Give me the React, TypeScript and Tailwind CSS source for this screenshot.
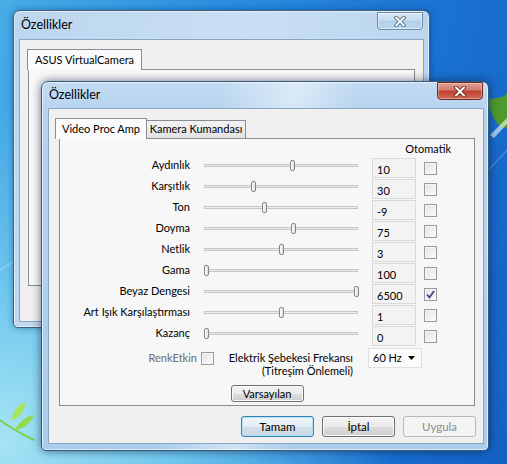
import React from "react";

type Row = { label: string; value: string; pos: number; checked?: boolean };

// pos = thumb centre, px from the left end of the track
const rows: Row[] = [
  { label: "Aydınlık", value: "10", pos: 88 },
  { label: "Karşıtlık", value: "30", pos: 49 },
  { label: "Ton", value: "-9", pos: 60 },
  { label: "Doyma", value: "75", pos: 89 },
  { label: "Netlik", value: "3", pos: 77 },
  { label: "Gama", value: "100", pos: 2 },
  { label: "Beyaz Dengesi", value: "6500", pos: 152, checked: true },
  { label: "Art Işık Karşılaştırması", value: "1", pos: 77 },
  { label: "Kazanç", value: "0", pos: 2 },
];

const CheckBox = ({ checked = false }: { checked?: boolean }) => (
  <div className="w-[13px] h-[13px] border border-[#9a9a9a] bg-[linear-gradient(135deg,#e4e4e4,#fbfbfb)] shadow-[inset_0_0_0_1px_#f6f6f6] flex items-center justify-center">
    {checked && (
      <svg width="9" height="9" viewBox="0 0 9 9">
        <path d="M1 4.5 L3.5 7.5 L8 1" fill="none" stroke="#3f4f86" strokeWidth="1.8" />
      </svg>
    )}
  </div>
);

const Slider = ({ pos }: { pos: number }) => (
  <div className="relative w-[154px] h-[14px] shrink-0">
    <div className="absolute left-0 right-0 top-[6px] h-[3px] border border-[#c6c6c6] bg-[#ececec]" />
    <div
      className="absolute top-[2px] w-[5px] h-[11px] rounded-[2px] border border-[#868686] bg-[linear-gradient(90deg,#ffffff,#dedede)]"
      style={{ left: pos - 2 }}
    />
  </div>
);

const CloseButton = ({ active }: { active: boolean }) => (
  <div
    className={
      active
        ? "w-[46px] h-[18px] rounded-b-[4px] border border-[#6b2a2a] bg-[linear-gradient(180deg,#e3a093_0%,#d2796b_45%,#bf3f2f_50%,#cf6a55_100%)] shadow-[inset_0_0_0_1px_rgba(255,255,255,0.35)] flex items-center justify-center"
        : "w-[46px] h-[18px] rounded-b-[4px] border border-[#6a8aac] bg-[linear-gradient(180deg,#d8e8f6_0%,#c3daef_50%,#b2cfea_50%,#bcd6ef_100%)] shadow-[inset_0_0_0_1px_rgba(255,255,255,0.5)] flex items-center justify-center"
    }
  >
    <svg width="12" height="11" viewBox="0 0 12 11">
      <path
        d="M2 1.5 L10 9.5 M10 1.5 L2 9.5"
        stroke={active ? "#5a1d16" : "#3d5470"}
        strokeWidth="3.6"
        strokeLinecap="round"
      />
      <path d="M2 1.5 L10 9.5 M10 1.5 L2 9.5" stroke="#ffffff" strokeWidth="2" strokeLinecap="round" />
    </svg>
  </div>
);

const Button = ({ children, kind = "normal" }: { children: React.ReactNode; kind?: "normal" | "default" | "disabled" }) => {
  const cls =
    kind === "default"
      ? "border-[#3c7fb1] bg-[linear-gradient(180deg,#f1f6fa_0%,#e4edf4_50%,#d3e0ea_50%,#c9d8e4_100%)] shadow-[inset_0_0_0_1px_#aee4fb] text-black"
      : kind === "disabled"
      ? "border-[#b5b9bc] bg-[#f4f4f4] text-[#8d8d8d]"
      : "border-[#707070] bg-[linear-gradient(180deg,#f2f2f2_0%,#ebebeb_50%,#dddddd_50%,#cfcfcf_100%)] shadow-[inset_0_0_0_1px_#fbfbfb] text-black";
  return (
    <div className={`w-[73px] h-[21px] rounded-[3px] border flex items-center justify-center text-[11.5px] ${cls}`}>
      {children}
    </div>
  );
};

export default function App() {
  return (
    <div className="relative w-[507px] h-[464px] overflow-hidden font-['Lato',sans-serif] text-[11px] text-black bg-[radial-gradient(ellipse_at_0%_95%,#a6e4f4_0%,#6cc6ee_25%,transparent_55%),linear-gradient(105deg,#48ace6_0%,#2a8ee0_35%,#1a73d2_70%,#1461c4_100%)]">
      {/* desktop streaks + logo bits */}
      <svg className="absolute left-0 top-0" width="507" height="464" viewBox="0 0 507 464">
        <path d="M0 270 L40 245" stroke="rgba(255,255,255,0.45)" strokeWidth="1" />
        <path d="M470 190 L507 150" stroke="rgba(255,255,255,0.35)" strokeWidth="1" />
        <path d="M488 100 C498 96 504 100 507 92 L507 128 C500 128 492 122 488 100 Z" fill="#4f9a2c" />
        <path d="M490 135 L507 118 L507 124 L494 138 Z" fill="rgba(255,255,255,0.6)" />
        <path d="M12 418 C14 408 20 404 26 402 C24 412 20 418 12 420 Z" fill="#a6e45e" />
        <path d="M16 428 C20 420 28 416 34 415 C30 424 24 428 16 430 Z" fill="#8fdb4c" />
        <path d="M0 420 C10 428 22 434 34 440" stroke="#7cd04a" strokeWidth="2" fill="none" />
      </svg>

      {/* back window */}
      <div className="absolute left-[13px] top-[10px] w-[417px] h-[318px] rounded-t-[7px] rounded-b-[5px] border border-[#41607f] bg-[linear-gradient(100deg,#bcd6ef_0%,#c9dff3_50%,#b7d3ee_100%)] shadow-[0_0_6px_rgba(0,40,90,0.45),inset_0_0_0_1px_rgba(255,255,255,0.55)] flex flex-col">
        <div className="h-[28px] flex items-start justify-between pl-[7px] pr-[6px]">
          <span className="mt-[5px] text-[12.5px] leading-[18px]">Özellikler</span>
          <div className="mt-[1px]">
            <CloseButton active={false} />
          </div>
        </div>
        <div className="mx-[5px] mb-[5px] flex-1 border border-[#8ba5c1] bg-[#f0f0f0] pt-[8px] flex flex-col">
          <div className="flex pl-[7px]">
            <div className="h-[21px] px-[7px] border border-b-0 border-[#898c95] bg-[#fbfbfb] flex items-center relative top-[1px] whitespace-nowrap">
              ASUS VirtualCamera
            </div>
          </div>
          <div className="ml-[8px] mr-[8px] h-[217px] border border-[#898c95] bg-[#f8f8f8]" />
        </div>
      </div>

      {/* front window */}
      <div className="absolute left-[41px] top-[81px] w-[448px] h-[370px] rounded-t-[7px] rounded-b-[5px] border border-[#3a5878] bg-[linear-gradient(100deg,rgba(255,255,255,0)_35%,rgba(255,255,255,0.45)_50%,rgba(255,255,255,0)_62%),linear-gradient(180deg,#c2dbf2_0%,#b6d3ee_30px,#a9cdec_100%)] shadow-[0_0_10px_rgba(0,20,60,0.6),inset_0_0_0_1px_rgba(255,255,255,0.6)] flex flex-col">
        <div className="h-[26px] flex items-start justify-between pl-[7px] pr-[5px]">
          <span className="mt-[4px] text-[12.5px] leading-[18px]">Özellikler</span>
          <CloseButton active />
        </div>
        <div className="ml-[6px] mr-[4px] mb-[6px] flex-1 border border-[#8ba5c1] bg-[#f0f0f0] flex flex-col">
          {/* tabs */}
          <div className="flex items-end pl-[6px] pt-[8px] whitespace-nowrap">
            <div className="h-[21px] w-[92px] border border-b-0 border-[#898c95] bg-[#fbfbfb] flex items-center justify-center relative top-[1px] z-10">
              Video Proc Amp
            </div>
            <div className="h-[18px] w-[99px] border border-l-0 border-b-0 border-[#898c95] bg-[linear-gradient(180deg,#f3f3f3,#e3e3e3)] flex items-center justify-center">
              Kamera Kumandası
            </div>
          </div>
          {/* tab panel */}
          <div className="ml-[10px] mr-[8px] h-[268px] border border-[#898c95] bg-[#f7f7f7] pt-[3px] flex flex-col">
            <div className="h-[14px] leading-[14px] text-right pr-[23px]">Otomatik</div>
            <div className="mt-[2px] flex flex-col">
              {rows.map((r, i) => (
                <div key={`row${i}`} className="h-[21px] flex items-start">
                  <div className="w-[130px] h-[14px] leading-[14px] text-right whitespace-nowrap">{r.label}</div>
                  <div className="ml-[14px]">
                    <Slider pos={r.pos} />
                  </div>
                  <div className="ml-[14px] w-[44px] h-[20px] border border-[#d9d9d9] bg-[#f3f3f3] pl-[4px] leading-[19px] pt-[1px]">
                    {r.value}
                  </div>
                  <div className="ml-[8px] mt-[4px]">
                    <CheckBox checked={r.checked} />
                  </div>
                </div>
              ))}
            </div>
            {/* power line frequency row */}
            <div className="h-[32px] flex items-start">
              <div className="w-[141px] flex justify-end items-center mt-[5px]">
                <span className="text-[#6d6d6d] leading-[12px] mr-[4px]">RenkEtkin</span>
              </div>
              <div className="mt-[5px]">
                <CheckBox />
              </div>
              <div className="w-[139px] mt-[4px] text-right leading-[13px] whitespace-nowrap">
                <div>Elektrik Şebekesi Frekansı</div>
                <div>(Titreşim Önlemeli)</div>
              </div>
              <div className="ml-[15px] mt-[1px] w-[54px] h-[20px] border border-[#e0e0e0] bg-[#fcfcfc] flex items-center justify-between pl-[4px] pr-[6px]">
                <span>60 Hz</span>
                <svg width="7" height="4" viewBox="0 0 7 4">
                  <path d="M0 0 L7 0 L3.5 4 Z" fill="#000" />
                </svg>
              </div>
            </div>
            <div className="mt-[6px] flex justify-center">
              <div className="w-[73px] h-[17px] rounded-[3px] border border-[#707070] bg-[linear-gradient(180deg,#f2f2f2_0%,#ebebeb_50%,#dddddd_50%,#cfcfcf_100%)] shadow-[inset_0_0_0_1px_#fbfbfb] flex items-center justify-center leading-[14px] whitespace-nowrap">
                Varsayılan
              </div>
            </div>
          </div>
          {/* dialog buttons */}
          <div className="mt-[10px] flex justify-end gap-[8px] pr-[7px]">
            <Button kind="default">Tamam</Button>
            <Button>İptal</Button>
            <Button kind="disabled">Uygula</Button>
          </div>
        </div>
      </div>
    </div>
  );
}
